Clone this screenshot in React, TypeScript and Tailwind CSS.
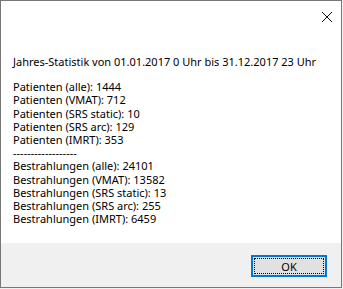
import React from "react";

const patienten = [
  "Patienten (alle): 1444",
  "Patienten (VMAT): 712",
  "Patienten (SRS static): 10",
  "Patienten (SRS arc): 129",
  "Patienten (IMRT): 353",
];

const bestrahlungen = [
  "Bestrahlungen (alle): 24101",
  "Bestrahlungen (VMAT): 13582",
  "Bestrahlungen (SRS static): 13",
  "Bestrahlungen (SRS arc): 255",
  "Bestrahlungen (IMRT): 6459",
];

function App() {
  return (
    <div
      className="w-[343px] h-[289px] bg-[#f0f0f0] overflow-hidden"
      style={{ fontFamily: '"Noto Sans", "Liberation Sans", sans-serif' }}
    >
      <div className="w-[342px] h-[288px] border border-[#777777] bg-white flex flex-col">
        {/* title bar */}
        <div className="h-[30px] flex justify-end items-center pr-[8px]">
          <svg width="12" height="12" viewBox="0 0 12 12" className="mt-[1px]">
            <path d="M1 1 L11 11 M11 1 L1 11" stroke="#111" strokeWidth="1" fill="none" />
          </svg>
        </div>

        {/* message */}
        <div className="flex-1 pl-[12px] pt-[24px] text-[11px] leading-[13.2px] text-black whitespace-nowrap">
          <div className="mb-[12px]">
            Jahres-Statistik von 01.01.2017 0 Uhr bis 31.12.2017 23 Uhr
          </div>
          {patienten.map((l) => (
            <div key={l}>{l}</div>
          ))}
          <div>------------------</div>
          {bestrahlungen.map((l) => (
            <div key={l}>{l}</div>
          ))}
        </div>

        {/* footer */}
        <div className="h-[44px] bg-[#f0f0f0] flex justify-end items-start pt-[12px] pr-[14px]">
          <button className="w-[76px] h-[22px] border-2 border-[#0078d7] bg-[#e1e1e1] p-[1px] text-[11px] text-black">
            <div className="w-full h-full border border-dotted border-black flex items-center justify-center leading-none">
              OK
            </div>
          </button>
        </div>
      </div>
    </div>
  );
}

export default App;
